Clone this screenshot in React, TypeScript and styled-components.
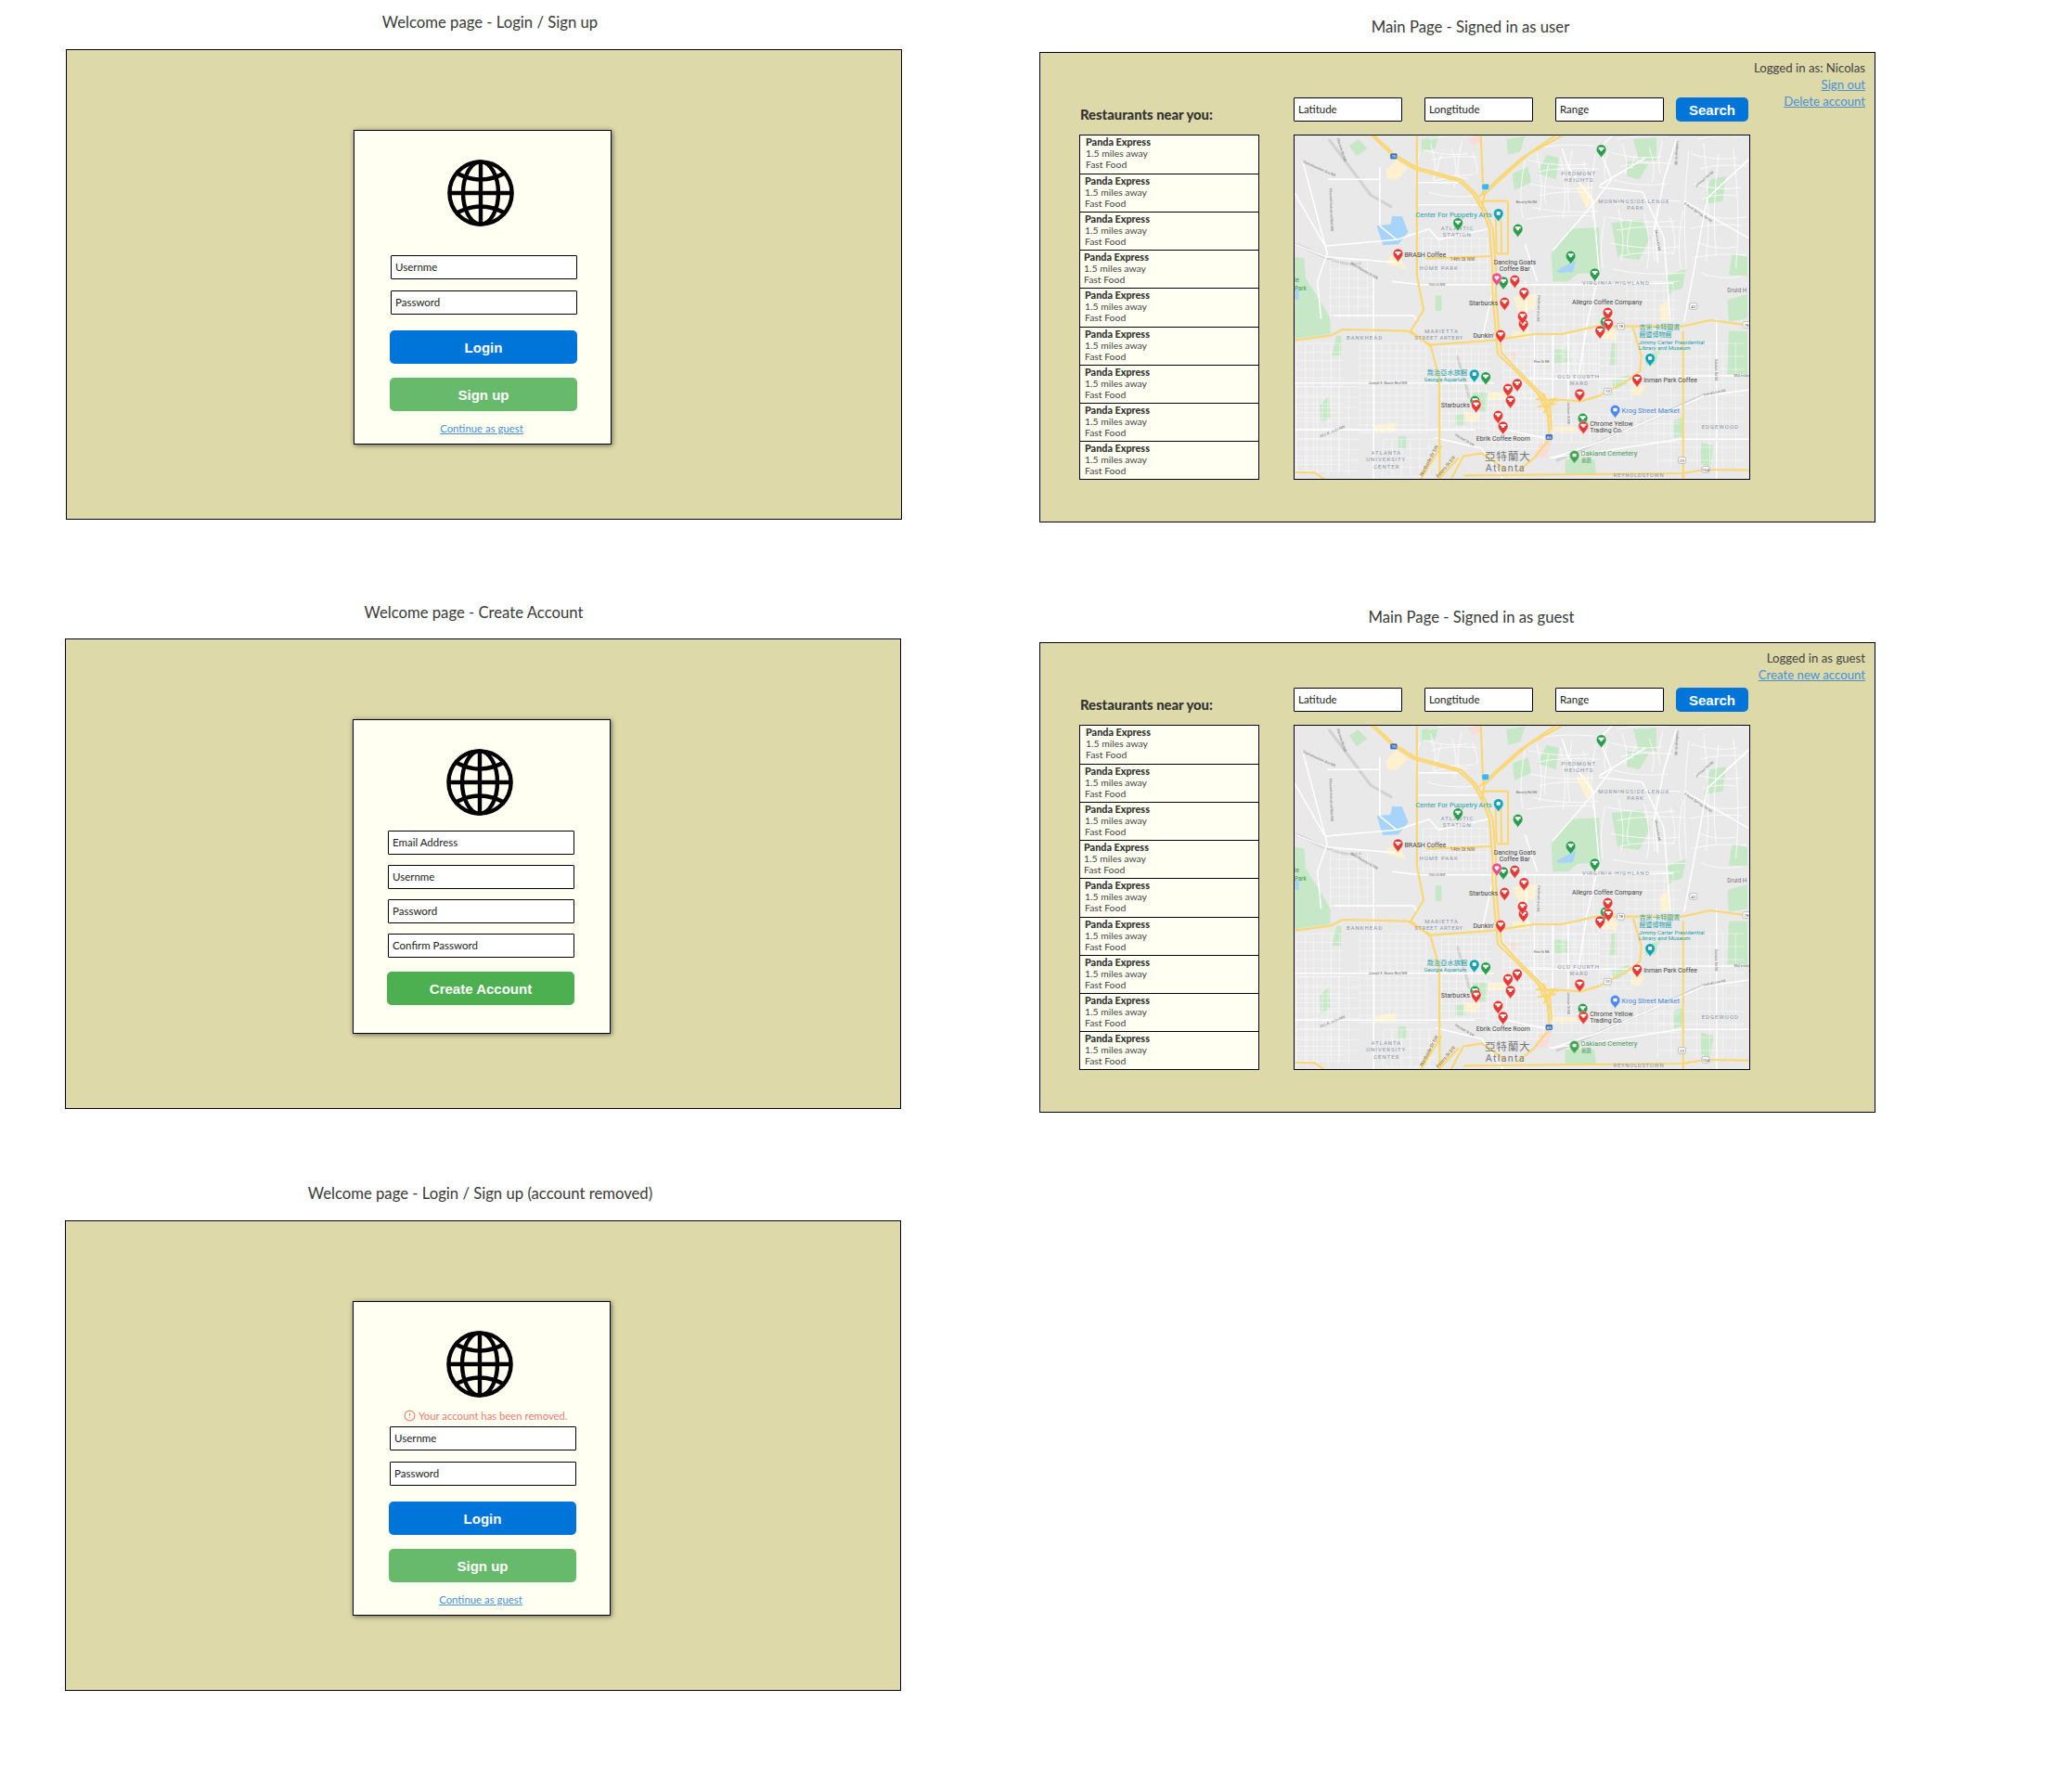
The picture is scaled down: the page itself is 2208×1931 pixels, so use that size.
import React from "react";
import styled, { createGlobalStyle } from "styled-components";
import { CircleAlert } from "lucide-react";

const Global = createGlobalStyle`
  html, body { margin: 0; padding: 0; background: #fff; }
  body { font-family: Lato, "Noto Sans", sans-serif; color: #333; }
`;

const Page = styled.div`
  display: flex;
  width: 2208px;
  height: 1931px;
  overflow: hidden;
`;
const Column = styled.div<{ $left: number; $top: number }>`
  margin-left: ${(p) => p.$left}px;
  padding-top: ${(p) => p.$top}px;
  width: 901px;
`;
const Section = styled.section<{ $top?: number; $nudge?: number }>`
  margin-top: ${(p) => p.$top ?? 0}px;
  margin-left: ${(p) => p.$nudge ?? 0}px;
`;
const Title = styled.h2<{ $shift: number; $gap: number }>`
  margin: 0 ${(p) => -p.$shift}px ${(p) => p.$gap}px ${(p) => p.$shift}px;
  height: 24px;
  line-height: 24px;
  text-align: center;
  font-size: 16.7px;
  font-weight: 400;
  color: #3a3a3a;
`;
const Frame = styled.div`
  box-sizing: border-box;
  width: 901px;
  height: 507px;
  border: 1px solid #000;
  background: #ddd9a9;
`;
const WelcomeFrame = styled(Frame)`
  padding: 86px 0 0 309px;
`;
const MainFrame = styled(Frame)`
  display: flex;
  padding: 0 10px 0 42px;
`;

const Card = styled.div`
  box-sizing: border-box;
  width: 278px;
  height: 339px;
  border: 1px solid #000;
  background: #fffff2;
  box-shadow: 1px 1px 5px rgba(0, 0, 0, 0.55);
  padding-top: 31px;
`;
const GlobeIcon = styled.svg`
  display: block;
  width: 72px;
  height: 72px;
  margin-left: 100px;
`;
const Form = styled.div<{ $left: number; $top: number; $gap: number }>`
  display: flex;
  flex-direction: column;
  width: 202px;
  margin: ${(p) => p.$top}px 0 0 ${(p) => p.$left}px;
  row-gap: ${(p) => p.$gap}px;
`;
const Field = styled.div`
  box-sizing: border-box;
  height: 26px;
  margin-left: 1px;
  padding-left: 4px;
  border: 1px solid #000;
  border-radius: 1px;
  background: #fff;
  font-size: 11.5px;
  line-height: 24px;
  color: #222;
`;
const Actions = styled.div<{ $top: number }>`
  display: flex;
  flex-direction: column;
  row-gap: 15px;
  margin-top: ${(p) => p.$top}px;
`;
const Button = styled.button<{ $color: string }>`
  height: 36px;
  padding: 0;
  border: none;
  border-radius: 5px;
  background: ${(p) => p.$color};
  color: #fff;
  font-family: "Liberation Sans", sans-serif;
  font-size: 15px;
  font-weight: 700;
`;
const GuestLink = styled.a`
  align-self: center;
  margin: -3px 4px 0 0;
  font-size: 11.4px;
  line-height: 14px;
  color: #4a90d2;
  text-decoration: underline;
`;
const ErrorLine = styled.div`
  display: flex;
  align-items: center;
  column-gap: 3px;
  height: 14px;
  margin: 12px 0 0 54px;
  font-size: 11.3px;
  color: #e67c73;
`;

const Main = styled.div`
  display: grid;
  grid-template-columns: 194px 492px;
  grid-template-rows: 26px 372px;
  column-gap: 37px;
  row-gap: 14px;
  padding-top: 48px;
`;
const Heading = styled.h3`
  align-self: end;
  margin: 0 0 -1px 1px;
  font-size: 14.8px;
  line-height: 18px;
  font-weight: 900;
  color: #333;
`;
const Toolbar = styled.div`
  display: flex;
`;
const BarField = styled(Field)<{ $after: number }>`
  width: 117px;
  margin: 0 ${(p) => p.$after}px 0 0;
`;
const SearchButton = styled(Button)`
  width: 78px;
  height: 26px;
`;
const List = styled.div`
  display: grid;
  grid-template-rows: repeat(9, 1fr);
  box-sizing: border-box;
  border: 1px solid #000;
  background: #fffff2;
`;
const Row = styled.div<{ $indent: number }>`
  box-sizing: border-box;
  padding: 1px 0 0 ${(p) => p.$indent}px;
  font-size: 10.4px;
  line-height: 12px;
  color: #444;
  & + & {
    border-top: 1px solid #000;
  }
`;
const RowName = styled.div`
  font-size: 10.8px;
  font-weight: 900;
  color: #333;
`;
const MapBox = styled.div`
  box-sizing: border-box;
  border: 1px solid #000;
  overflow: hidden;
  background: #e9e9e9;
`;
const MapSvg = styled.svg`
  display: block;
  width: 100%;
  height: 100%;
  filter: blur(0.3px);
`;
const Account = styled.div`
  margin-left: auto;
  padding-top: 7px;
  text-align: right;
  font-size: 13.2px;
  line-height: 18px;
  color: #444;
`;
const AccountLink = styled.a`
  display: block;
  color: #4a90d2;
  text-decoration: underline;
`;

const Globe = () => (
  <GlobeIcon viewBox="0 0 72 72" fill="none" stroke="#000" strokeWidth="4.4">
    <circle cx="36" cy="36" r="33.6" />
    <ellipse cx="36" cy="36" rx="19" ry="33.6" />
    <path d="M36 2.4V69.6M2.4 36H69.6" />
    <path d="M8.5 13.5Q22 21.5 36 21.5T63.5 13.5M8.5 58.5Q22 50.5 36 50.5T63.5 58.5" />
  </GlobeIcon>
);

const LoginCard = ({ left, removed }: { left: number; removed?: boolean }) => (
  <Card>
    <Globe />
    {removed && (
      <ErrorLine>
        <CircleAlert size={13} strokeWidth={2} />
        Your account has been removed.
      </ErrorLine>
    )}
    <Form $left={left} $top={removed ? 5 : 31} $gap={12}>
      <Field>Usernme</Field>
      <Field>Password</Field>
      <Actions $top={5}>
        <Button $color="#0075d9">Login</Button>
        <Button $color="#67b96b">Sign up</Button>
        <GuestLink href="#">Continue as guest</GuestLink>
      </Actions>
    </Form>
  </Card>
);

/* ---------- map drawing; coordinates are in the 3x crop of the map ---------- */
const gridPatches: number[][] = [
  [20, 720, 170, 1130, 28], [225, 720, 445, 1010, 24], [490, 730, 650, 1000, 24], [690, 720, 840, 900, 22],
  [790, 530, 1000, 820, 32], [850, 950, 1260, 1040, 30], [430, 380, 640, 520, 26], [130, 450, 260, 640, 30],
  [1000, 690, 1110, 900, 26], [1190, 720, 1470, 1120, 42], [640, 880, 830, 1060, 20], [300, 1030, 470, 1150, 30],
  [20, 860, 220, 1150, 34], [1090, 520, 1260, 650, 30], [880, 720, 1000, 840, 22],
];
const curvyPatches: number[][] = [
  [760, 90, 1000, 340, 38], [420, 60, 610, 240, 34], [1020, 270, 1280, 500, 42], [1290, 60, 1480, 500, 48], [1030, 60, 1240, 220, 44],
];
const gridPath = gridPatches
  .map(([x1, y1, x2, y2, s]) => {
    let d = "";
    for (let x = x1; x <= x2; x += s) d += `M${x} ${y1}V${y2}`;
    for (let y = y1; y <= y2; y += s) d += `M${x1} ${y}H${x2}`;
    return d;
  })
  .join("");
const curvyPath = curvyPatches
  .map(([x1, y1, x2, y2, s]) => {
    let d = "";
    let k = 0;
    for (let x = x1; x <= x2; x += s) {
      const b = k++ % 2 ? 26 : -22;
      const top = y1 + (k * 37) % 60;
      d += `M${x} ${top}Q${x + b} ${(top + y2) / 2} ${x + b / 3} ${y2 - (k * 23) % 70}`;
    }
    k = 0;
    for (let y = y1; y <= y2; y += s) {
      const b = k++ % 2 ? 24 : -18;
      d += `M${x1 + (k * 29) % 50} ${y}Q${(x1 + x2) / 2} ${y + b} ${x2 - (k * 17) % 50} ${y + b / 2}`;
    }
    return d;
  })
  .join("");

const greens = [
  "M15 440L45 445 50 510 95 580 130 640 130 690 15 705Z",
  "M850 520L845 430 905 350 1000 345 1005 490 930 495 900 520Z",
  "M1110 60L1185 55 1185 130 1130 130Z",
  "M190 80L220 60 250 90 215 115Z",
  "M425 60L480 50 470 90 425 100Z",
  "M700 60L760 50 745 100 705 110Z",
  "M830 110L870 120 860 190 800 170Z",
  "M720 170L770 150 780 200 725 225Z",
  "M1040 330L1140 320 1165 380 1130 450 1060 440Z",
  "M1360 190L1410 180 1400 260 1340 270Z",
  "M1430 430L1480 440 1480 500 1420 500Z",
  "M1220 500L1280 480 1270 540 1225 560Z",
  "M1090 130L1160 140 1130 190 1090 180Z",
  "M1415 580L1480 560 1480 640 1420 650Z",
  "M1420 680L1480 680 1480 820 1415 820Z",
  "M890 1095L985 1095 990 1140 890 1140Z",
  "M855 740L905 740 905 780 855 785Z",
  "M590 880L640 880 635 940 600 940Z",
  "M535 950L565 950 565 985 535 985Z",
  "M470 565L490 565 490 615 470 615Z",
  "M95 920L125 890 130 960 100 980Z",
  "M1040 720L1055 720 1055 790 1035 790Z",
  "M350 1020L375 1020 375 1060 350 1060Z",
  "M1040 840L1100 820 1090 850 1050 870Z",
  "M150 695L165 695 165 760 135 760Z",
  "M1150 760L1200 740 1180 790 1150 790Z",
  "M1240 970L1270 960 1270 1020 1240 1025Z",
  "M1330 1040L1370 1050 1360 1120 1330 1110Z",
];
const beiges = [
  "M310 160L345 125 380 155 345 190 315 190Z",
  "M925 215L955 205 985 260 960 285Z",
  "M305 458L345 420 375 480 340 470Z",
  "M1005 660L1060 680 1055 710 1005 705Z",
  "M640 880L700 880 710 900 640 905Z",
  "M720 570L800 560 790 610 740 620Z",
  "M720 680L780 680 770 705 720 705Z",
  "M850 990L930 990 930 1005 850 1005Z",
  "M1110 850L1150 860 1130 890 1105 885Z",
  "M1195 600L1225 580 1225 650 1200 650Z",
  "M270 990L340 975 340 1005 270 1005Z",
  "M565 940L615 950 600 975 565 970Z",
];
const highways = [
  "M262 46L330 112 400 155 480 178 545 195 590 235 622 290 645 350 655 480 655 560 665 680 672 755 720 800 790 870 830 915 838 1000 838 1030 790 1090 735 1135",
  "M270 46L336 108 405 150 485 172 552 190 600 235 632 290 656 350 666 480 666 560 676 680 684 750 730 800 800 870 840 910 846 1000",
  "M880 48L770 110 680 190 628 240 622 285",
  "M858 48L745 125 665 195 612 245",
  "M665 300L668 430M682 300L684 430M705 260V430H670M620 260L705 260",
  "M617 46L625 240",
  "M410 46V500L432 612 390 680 455 730 482 830 484 1160",
  "M15 710L130 695 170 675 380 680 455 725 660 710 790 690 880 690 990 665 1100 665 1270 665 1360 645 1485 662",
  "M440 446L650 438",
  "M840 900L940 907 1000 890 1090 842 1132 810 1137 760 1110 670",
  "M15 1137L80 1138 110 1160",
  "M560 1147L1270 1140 1345 1128 1485 1130",
  "M1272 680V1160",
  "M520 1160L560 1085 620 1075 700 1130",
  "M800 880L840 960M820 880L835 950M860 895L820 945M795 900L870 905M800 925L860 915",
  "M422 1160L490 1050M480 1160L545 1090",
];
const whites = [
  "M40 130L120 430 88 520 100 640",
  "M115 405L345 385 450 350 480 385 640 350",
  "M270 500V1160",
  "M15 848H660M760 835H1100",
  "M15 400L115 440M115 440L340 458",
  "M410 200H545M410 272H620",
  "M290 150V340L345 385",
  "M330 520L420 530H1000L1240 525",
  "M140 630H400L410 650",
  "M850 420L980 270 1040 190 1000 90 1040 50",
  "M880 90L900 150 980 260 1000 490 960 660 930 850",
  "M1000 215L1140 230 1210 380 1230 650",
  "M1250 60L1210 190 1180 350 1190 460",
  "M1275 260L1485 380",
  "M1000 210L1150 120",
  "M1485 125L1350 250 1300 520 1275 650",
  "M15 1000H470L600 1000M700 1000L840 1030",
  "M470 1025L620 1060 690 1160",
  "M850 690V900M900 690V900M790 690V870",
  "M660 530L620 710M760 520L770 700",
  "M1380 640V1160M1190 825H1485",
  "M1485 870L1340 890 1180 960 1000 1040 850 1090",
  "M840 1090L1000 1070 1260 1030H1485",
  "M120 190L290 190",
  "M760 400L800 520",
  "M15 235L110 400",
];
const greys = [
  "M125 60L260 240 330 280M15 400C60 410 160 480 230 460M540 760L570 860 580 900",
  "M860 1100L1180 960 1340 885",
];

type L = [string, number, number, number, string, number?];
const INK = "#444";
const NBH = "#8a94a8";
const labels: L[] = [
  ["Center For Puppetry Arts", 406, 311, 22.5, "#1ea0a8"],
  ["BRASH Coffee", 370, 440, 21, INK],
  ["14th St NW", 518, 453, 16, "#8a6a20"],
  ["Dancing Goats", 659, 464, 21, INK],
  ["Coffee Bar", 677, 487, 21, INK],
  ["Starbucks", 579, 596, 21, INK],
  ["Allegro Coffee Company", 912, 594, 21, INK],
  ["Dunkin'", 592, 702, 21, INK],
  ["Inman Park Coffee", 1144, 846, 21, INK],
  ["Starbucks", 488, 928, 21, INK],
  ["Chrome Yellow", 970, 986, 21, INK],
  ["Trading Co.", 970, 1009, 21, INK],
  ["Ebrik Coffee Room", 602, 1035, 21, INK],
  ["Krog Street Market", 1073, 946, 22.5, "#4a88e0"],
  ["Oakland Cemetery", 940, 1082, 22.5, "#3f9a55"],
  ["墓園", 942, 1103, 16, "#3f9a55"],
  ["吉米·卡特圖書", 1130, 675, 21, "#1ea0a8"],
  ["館暨博物館", 1130, 699, 21, "#1ea0a8"],
  ["Jimmy Carter Presidential", 1128, 722, 18.5, "#1ea0a8"],
  ["Library and Museum", 1128, 741, 18.5, "#1ea0a8"],
  ["喬治亞水族館", 442, 821, 22, "#1ea0a8"],
  ["Georgia Aquarium", 434, 842, 17, "#1ea0a8"],
  ["PIEDMONT", 877, 176, 18, NBH, 3],
  ["HEIGHTS", 887, 198, 18, NBH, 3],
  ["MORNINGSIDE-LENOX", 997, 267, 18, NBH, 3],
  ["PARK", 1090, 289, 18, NBH, 3],
  ["ATLANTIC", 488, 353, 18, NBH, 3],
  ["STATION", 494, 375, 18, NBH, 3],
  ["HOME PARK", 418, 482, 18, NBH, 3],
  ["VIRGINIA-HIGHLAND", 945, 532, 18, NBH, 3],
  ["MARIETTA", 435, 686, 18, NBH, 3],
  ["STREET ARTERY", 402, 708, 18, NBH, 2],
  ["BANKHEAD", 182, 708, 18, NBH, 3],
  ["OLD FOURTH", 866, 834, 18, NBH, 3],
  ["WARD", 904, 856, 18, NBH, 3],
  ["EDGEWOOD", 1332, 996, 18, NBH, 3],
  ["ATLANTA", 262, 1081, 18, NBH, 3],
  ["UNIVERSITY", 246, 1102, 18, NBH, 3],
  ["CENTER", 270, 1124, 18, NBH, 3],
  ["REYNOLDSTOWN", 1046, 1151, 18, NBH, 2],
  ["亞特蘭大", 630, 1098, 35, "#777", 2],
  ["Atlanta", 632, 1134, 32, "#777", 4],
  ["Druid H", 1415, 556, 19, "#777"],
  ["le", 14, 523, 19, "#3f9a55"],
  ["Park", 14, 548, 19, "#3f9a55"],
  ["Beverly Rd NE", 731, 266, 11, "#666"],
  ["10th St NW", 447, 533, 11, "#666"],
  ["Pine St NE", 788, 782, 11, "#666"],
  ["Joseph E. Boone Blvd NW", 253, 852, 11, "#666"],
  ["McLendon", 1437, 827, 11, "#666"],
];
const tilted: [string, number, number, number, number, string?][] = [
  ["Chattahoochee Ave NW", 40, 135, 24, 11],
  ["Ellsworth Industrial Blvd NW", 127, 220, 88, 11],
  ["Marietta Rd NW", 150, 60, 72, 11],
  ["Best Marietta St NW", 195, 465, 30, 11],
  ["Piedmont Ave NE", 802, 565, 92, 11],
  ["Jackson St NE", 898, 910, 90, 11],
  ["Oakdale Rd NE", 1375, 770, 90, 11],
  ["Monroe Dr NE", 1180, 355, 80, 11],
  ["E Rock Springs Rd NE", 1275, 270, 34, 11],
  ["Johnson Rd NE", 1315, 215, -40, 11],
  ["Lindbergh Dr NE", 1250, 65, 95, 11],
  ["DeKalb Ave NE", 1340, 890, -12, 11],
  ["M.L.K. Jr Dr NW", 100, 1025, -22, 12],
  ["Mitchell St SW", 532, 1018, 30, 11],
  ["Northside Dr SW", 428, 1150, -62, 15, "#8a6a20"],
  ["Peters St SW", 480, 1155, -50, 15, "#8a6a20"],
];

const pins: [number, number, string, number?][] = [
  [1007, 93, "#2a9d4b"], [543, 330, "#2a9d4b"], [737, 350, "#2a9d4b"], [908, 437, "#2a9d4b"], [986, 493, "#2a9d4b"],
  [633, 828, "#2a9d4b"], [690, 520, "#2a9d4b"], [598, 905, "#2a9d4b"], [947, 962, "#2a9d4b"], [1020, 650, "#2a9d4b"],
  [674, 300, "#14a3b5", 1], [596, 820, "#14a3b5", 1], [1165, 768, "#14a3b5", 1], [1052, 935, "#4a8af0", 1], [920, 1082, "#3fa34d", 1],
  [349, 430, "#e53935"], [669, 508, "#ee4f83", 2], [727, 515, "#e53935"], [757, 555, "#e53935"], [694, 587, "#e53935"],
  [755, 657, "#e53935"], [752, 632, "#e53935"], [681, 692, "#e53935"], [1028, 620, "#e53935"], [1030, 655, "#e53935"],
  [1003, 679, "#e53935"], [1123, 835, "#e53935"], [937, 883, "#e53935"], [735, 850, "#e53935"], [705, 866, "#e53935"],
  [713, 904, "#e53935"], [602, 918, "#e53935"], [673, 953, "#e53935"], [689, 988, "#e53935"], [949, 987, "#e53935"],
];
const shields: [number, number, string, string][] = [
  [335, 115, "75", "#3b6fb5"], [838, 1023, "85", "#3b6fb5"], [632, 214, "", "#3fb7ee"], [1070, 665, "78", "#fff"],
  [1305, 600, "42", "#fff"], [1027, 875, "10", "#fff"], [1268, 1098, "23", "#fff"], [1345, 1128, "154", "#fff"], [1477, 660, "78", "#fff"],
];

const AtlantaMap = () => (
  <MapSvg viewBox="14 48 1472 1110" preserveAspectRatio="none">
    <rect x="0" y="0" width="1530" height="1200" fill="#e9e9e9" />
    {greens.map((d) => <path key={d} d={d} fill="#c6e8c6" />)}
    {beiges.map((d) => <path key={d} d={d} fill="#fdf1cf" />)}
    <path d="M280 340L325 335 330 308 362 310 382 360 350 400 300 402Z" fill="#a6d4fa" />
    <path d="M862 485L925 450 915 490 870 492Z" fill="#a6d4fa" />
    <path d="M15 545H28V578H15Z" fill="#a6d4fa" />
    <path d="M810 1040L850 1020 830 1090 790 1085Z" fill="#f8dcd6" />
    <path d="M710 750H735V770H710Z" fill="#f8dcd6" />
    <path d="M570 46H620V70L590 80Z" fill="#f8dcd6" />
    {greys.map((d) => <path key={d} d={d} fill="none" stroke="#d2d2d2" strokeWidth="9" />)}
    <path d={gridPath} fill="none" stroke="#fff" strokeWidth="1.8" strokeOpacity="0.8" />
    <path d={curvyPath} fill="none" stroke="#fff" strokeWidth="2.6" strokeOpacity="0.9" />
    {whites.map((d) => <path key={d} d={d} fill="none" stroke="#fff" strokeWidth="4.5" strokeLinejoin="round" />)}
    {highways.map((d) => <path key={d} d={d} fill="none" stroke="#fbd773" strokeWidth="6.5" strokeLinejoin="round" />)}
    {shields.map(([x, y, t, c]) => (
      <g key={`${x}-${y}`}>
        <rect x={x - 12} y={y - 10} width="24" height="20" rx="5" fill={c} stroke={c === "#fff" ? "#888" : "#fff"} strokeWidth="1.5" />
        <text x={x} y={y + 5} fontSize="13" textAnchor="middle" fontFamily="Roboto, sans-serif" fill={c === "#fff" ? "#444" : "#fff"}>{t}</text>
      </g>
    ))}
    {labels.map(([t, x, y, s, c, ls]) => (
      <text key={t + x} x={x} y={y} fontSize={s} fill={c} letterSpacing={ls ?? 0} fontFamily={'Roboto, "Noto Sans CJK TC", sans-serif'}>{t}</text>
    ))}
    {tilted.map(([t, x, y, a, s, c]) => (
      <text key={t} x={x} y={y} fontSize={s} fill={c ?? "#777"} transform={`rotate(${a} ${x} ${y})`} fontFamily="Roboto, sans-serif">{t}</text>
    ))}
    {pins.map(([x, y, c, kind]) => (
      <g key={`${x}-${y}-${c}`} transform={`translate(${x} ${y})`}>
        <path d="M0 28C-3 18-16 12-16 0A16 16 0 0 1 16 0C16 12 3 18 0 28Z" fill={c} stroke="#fff" strokeWidth="1.2" />
        {kind === 2 ? (
          <path d="M0 9L-8-1A4.8 4.8 0 0 1 0-5 4.8 4.8 0 0 1 8-1Z" fill="#fff" />
        ) : kind === 1 ? (
          <rect x="-6" y="-6" width="12" height="11" rx="2" fill="#fff" />
        ) : (
          <path d="M-9-7H9V-1H5L3 5H-3L-5-1H-9Z" fill="#fff" />
        )}
      </g>
    ))}
  </MapSvg>
);

const indents = [6, 5, 5, 4, 5, 5, 5, 5, 5];

const MainPanel = ({ children }: { children: React.ReactNode }) => (
  <MainFrame>
    <Main>
      <Heading>Restaurants near you:</Heading>
      <Toolbar>
        <BarField $after={24}>Latitude</BarField>
        <BarField $after={24}>Longtitude</BarField>
        <BarField $after={13}>Range</BarField>
        <SearchButton $color="#0075d9">Search</SearchButton>
      </Toolbar>
      <List>
        {indents.map((indent, i) => (
          <Row key={i} $indent={indent}>
            <RowName>Panda Express</RowName>
            <div>1.5 miles away</div>
            <div>Fast Food</div>
          </Row>
        ))}
      </List>
      <MapBox>
        <AtlantaMap />
      </MapBox>
    </Main>
    <Account>{children}</Account>
  </MainFrame>
);

export default function App() {
  return (
    <Page>
      <Global />
      <Column $left={70} $top={12}>
        <Section $nudge={1}>
          <Title $shift={7} $gap={17}>Welcome page - Login / Sign up</Title>
          <WelcomeFrame>
            <LoginCard left={38} />
          </WelcomeFrame>
        </Section>
        <Section $top={88}>
          <Title $shift={-10} $gap={16}>Welcome page - Create Account</Title>
          <WelcomeFrame>
            <Card>
              <Globe />
              <Form $left={36} $top={16} $gap={11}>
                <Field>Email Address</Field>
                <Field>Usernme</Field>
                <Field>Password</Field>
                <Field>Confirm Password</Field>
                <Actions $top={4}>
                  <Button $color="#4caf50">Create Account</Button>
                </Actions>
              </Form>
            </Card>
          </WelcomeFrame>
        </Section>
        <Section $top={79}>
          <Title $shift={-3} $gap={17}>Welcome page - Login / Sign up (account removed)</Title>
          <WelcomeFrame>
            <LoginCard left={38} removed />
          </WelcomeFrame>
        </Section>
      </Column>
      <Column $left={149} $top={17}>
        <Section>
          <Title $shift={14} $gap={15}>Main Page - Signed in as user</Title>
          <MainPanel>
            <div>Logged in as: Nicolas</div>
            <AccountLink href="#">Sign out</AccountLink>
            <AccountLink href="#">Delete account</AccountLink>
          </MainPanel>
        </Section>
        <Section $top={90}>
          <Title $shift={15} $gap={15}>Main Page - Signed in as guest</Title>
          <MainPanel>
            <div>Logged in as guest</div>
            <AccountLink href="#">Create new account</AccountLink>
          </MainPanel>
        </Section>
      </Column>
    </Page>
  );
}
